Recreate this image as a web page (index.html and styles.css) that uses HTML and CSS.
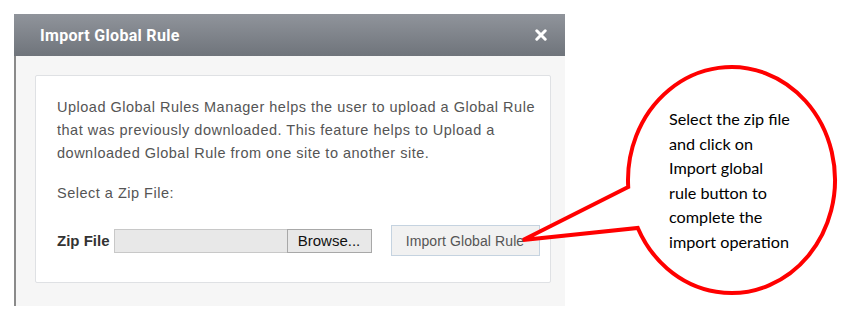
FILE: index.html
```html
<!DOCTYPE html>
<html>

<head>
    <title>Import Global Rule</title>
    <meta charset="utf-8">
    <link rel="stylesheet" href="styles.css">
</head>

<body>
    <section class="dialog">
        <header class="kop">
            <h1>Import Global Rule</h1>
            <button class="luk">
                <svg width="12" height="12" viewBox="0 0 12 12">
                    <path d="M1.8 1.8 L10.2 10.2 M10.2 1.8 L1.8 10.2" stroke="#fff" stroke-width="3" stroke-linecap="round"/>
                </svg>
            </button>
        </header>

        <div class="krop">
            <article class="panel">
                <p class="intro">Upload Global Rules Manager helps the user to upload a Global Rule that was previously downloaded. This feature helps to Upload a downloaded Global Rule from one site to another site.</p>
                <p class="vaelg">Select a Zip File:</p>
                <div class="raekke">
                    <label>Zip File</label>
                    <span class="felt"></span>
                    <button class="browse">Browse...</button>
                    <button class="importer">Import Global Rule</button>
                </div>
            </article>
        </div>
    </section>

    <!-- callout oven på dialogen -->
    <div class="boble">
        <svg width="340" height="250" viewBox="0 0 340 250">
            <path d="M107.2 125 L2 178 L116.8 166 A103.5 113 0 1 0 107.2 125 Z" fill="#fff" stroke="#ff0000" stroke-width="4" stroke-linejoin="miter"/>
        </svg>
        <p>Select the zip file and click on Import global rule button to complete the import operation</p>
    </div>
</body>

</html>
```

FILE: styles.css
```css
body {
    margin: 0;
    width: 851px;
    height: 323px;
    background: #fff;
    position: relative;
    font-family: "Liberation Sans", Arial, sans-serif;
}

.dialog {
    margin: 14px 0 0 14px;
    width: 551px;
}

.kop {
    height: 42px;
    display: flex;
    align-items: center;
    justify-content: space-between;
    padding: 0 18px 0 26px;
    background: linear-gradient(#90949b, #6f747b);
}

.kop h1 {
    margin: 0;
    font-family: Roboto, sans-serif;
    font-size: 16px;
    font-weight: bold;
    letter-spacing: 0.3px;
    color: #fff;
}

.luk {
    border: none;
    background: none;
    padding: 0;
    display: flex;
}

.krop {
    background: #f6f6f6;
    border-left: 2px solid #8a8a8a;
    padding: 19px 14px 23px 19px;
}

.panel {
    background: #fff;
    border: 1px solid #dfe1e4;
    border-radius: 2px;
    padding: 20px 10px 26px 21px;
    color: #555;
    font-size: 14.5px;
    letter-spacing: 0.5px;
}

.intro {
    margin: 0;
    line-height: 23px;
}

.vaelg {
    margin: 17px 0 20px;
    line-height: 23px;
}

.raekke {
    display: flex;
    align-items: center;
}

.raekke label {
    flex-shrink: 0;
    white-space: nowrap;
    font-weight: bold;
    font-size: 15px;
    letter-spacing: 0;
    color: #333;
    margin-right: 4px;
}

.felt {
    flex-shrink: 0;
    width: 172px;
    height: 22px;
    background: #e8e8e8;
    border: 1px solid #c8c8c8;
    border-right: none;
}

.browse {
    flex-shrink: 0;
    height: 24px;
    width: 85px;
    background: #e8e8e8;
    border: 1px solid #a8a8a8;
    font-family: "Liberation Sans", Arial, sans-serif;
    font-size: 15px;
    color: #111;
    padding: 0;
}

.importer {
    flex-shrink: 0;
    margin-left: 19px;
    height: 31px;
    width: 149px;
    background: #f1f1f1;
    border: 1px solid #c5d3e0;
    font-family: "Liberation Sans", Arial, sans-serif;
    font-size: 14px;
    letter-spacing: 0.1px;
    color: #555;
    padding: 0;
}

.boble {
    position: absolute;
    left: 521px;
    top: 62px;
    width: 340px;
    height: 250px;
}

.boble svg {
    position: absolute;
    left: 0;
    top: 0;
}

.boble p {
    position: absolute;
    left: 148px;
    top: 45px;
    width: 123px;
    margin: 0;
    font-family: Lato, "Open Sans", sans-serif;
    font-size: 16.2px;
    line-height: 24.5px;
    color: #000;
}
```
